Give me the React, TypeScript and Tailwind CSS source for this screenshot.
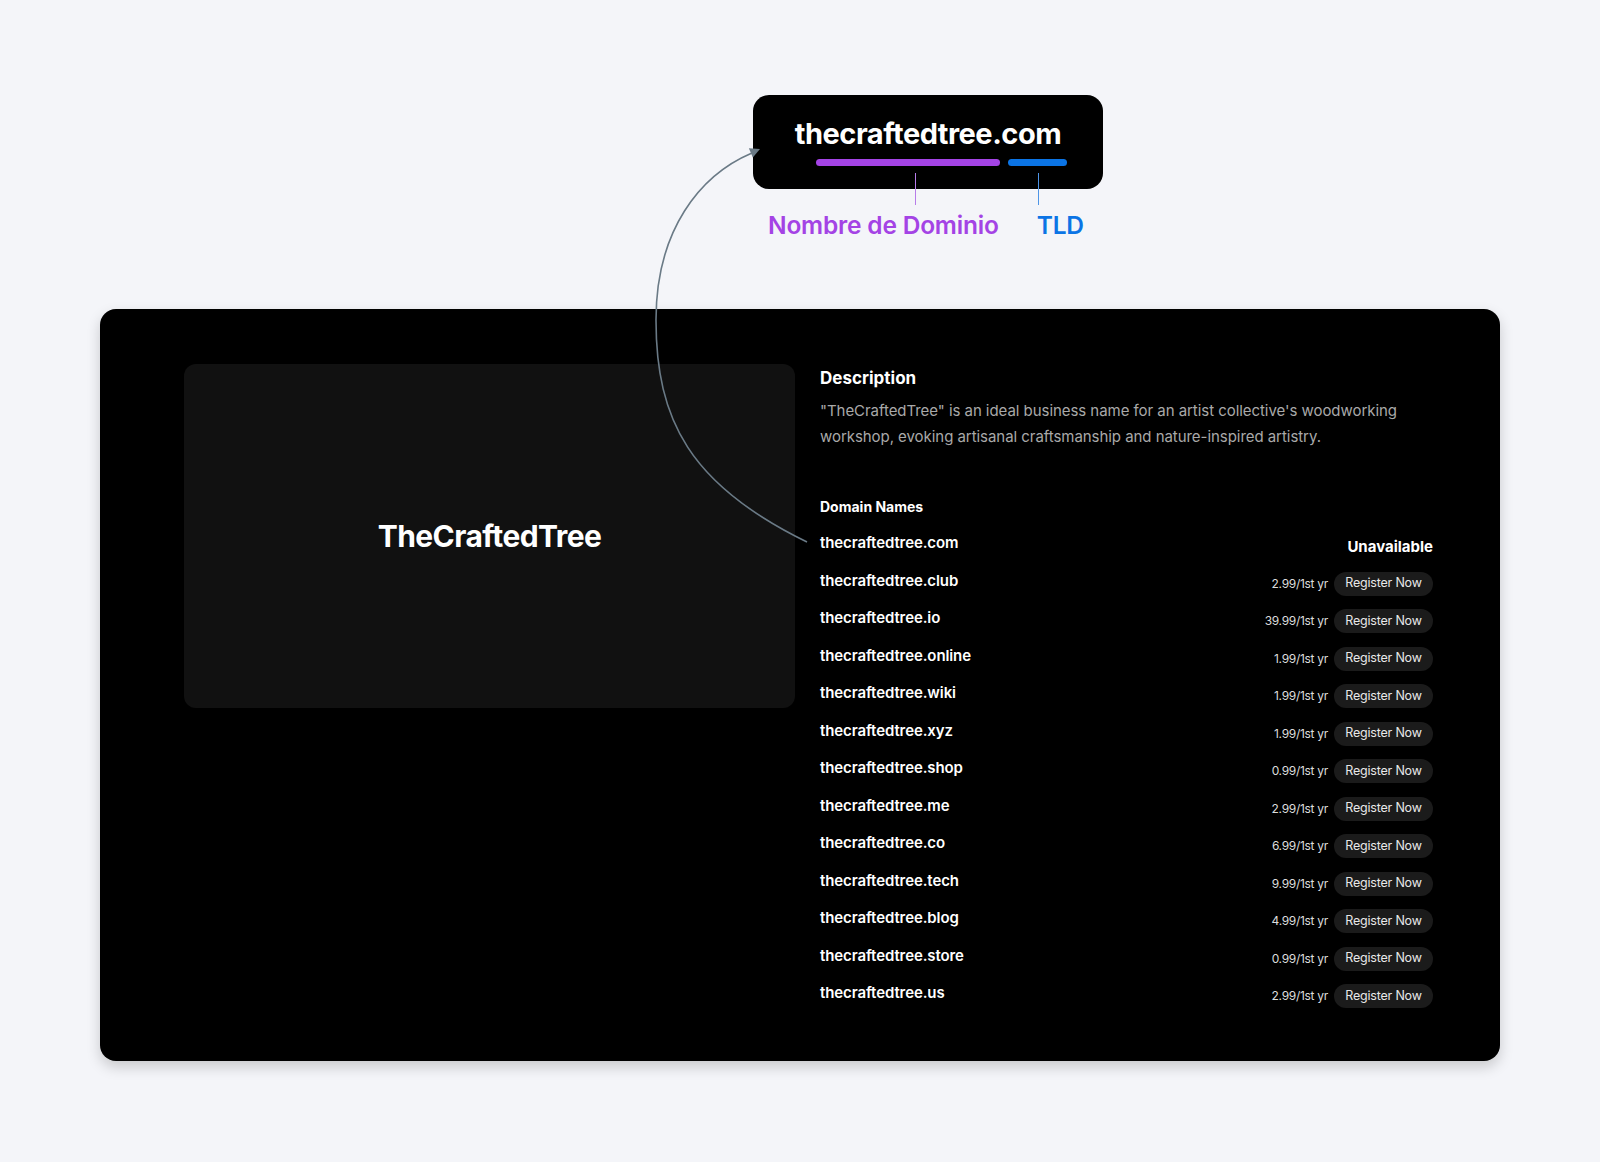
import React from "react";

const domains = [
  { name: "thecraftedtree.com", price: null },
  { name: "thecraftedtree.club", price: "2.99" },
  { name: "thecraftedtree.io", price: "39.99" },
  { name: "thecraftedtree.online", price: "1.99" },
  { name: "thecraftedtree.wiki", price: "1.99" },
  { name: "thecraftedtree.xyz", price: "1.99" },
  { name: "thecraftedtree.shop", price: "0.99" },
  { name: "thecraftedtree.me", price: "2.99" },
  { name: "thecraftedtree.co", price: "6.99" },
  { name: "thecraftedtree.tech", price: "9.99" },
  { name: "thecraftedtree.blog", price: "4.99" },
  { name: "thecraftedtree.store", price: "0.99" },
  { name: "thecraftedtree.us", price: "2.99" },
];

const font = { fontFamily: "Inter, 'Noto Sans', sans-serif" };

export default function App() {
  return (
    <div className="relative w-full min-h-[1162px] bg-[#f4f5f9] pt-[95px]" style={font}>
      {/* domain anatomy */}
      <div className="relative ml-[753px] w-[350px]">
        <div className="h-[94px] w-[350px] rounded-[16px] bg-black pt-[22px]">
          <div className="text-center text-[29px] leading-[34px] font-bold tracking-[-0.5px] text-white">
            thecraftedtree.com
          </div>
          <div className="mt-[8px] ml-[63px] flex gap-[8px]">
            <div className="h-[7px] w-[184px] rounded-full bg-[#a443e5]" />
            <div className="h-[7px] w-[59px] rounded-full bg-[#0b74e5]" />
          </div>
        </div>
        <div className="absolute left-[162px] top-[78px] h-[32px] w-px bg-[#b77de9]" />
        <div className="absolute left-[285px] top-[78px] h-[32px] w-px bg-[#4f95e6]" />
        <div className="mt-[22px] flex text-[24.5px] leading-[28px] font-semibold tracking-[-0.2px]">
          <span className="ml-[15px] text-[#a443e5]">Nombre de Dominio</span>
          <span className="ml-[38px] text-[#0b74e5]">TLD</span>
        </div>
      </div>

      {/* result card */}
      <div className="mx-[100px] mt-[70px] flex h-[752px] gap-[25px] rounded-[16px] bg-black pl-[84px] pr-[67px] pt-[55px] shadow-[0_6px_14px_rgba(0,0,0,0.18)]">
        <div className="flex h-[344px] w-[611px] shrink-0 items-center justify-center rounded-[12px] bg-[#111111]">
          <span className="text-[30px] font-bold tracking-[-0.6px] text-white">TheCraftedTree</span>
        </div>

        <div className="flex-1 pt-[2px] text-white">
          <h2 className="text-[17px] leading-[24px] font-bold">Description</h2>
          <p className="mt-[8px] text-[15px] leading-[25.5px] text-[#a9a9a9] tracking-[-0.05px]">
            "TheCraftedTree" is an ideal business name for an artist collective's woodworking
            workshop, evoking artisanal craftsmanship and nature-inspired artistry.
          </p>

          <h3 className="mt-[48px] text-[14px] leading-[20px] font-bold">Domain Names</h3>
          <div className="mt-[15px]">
            {domains.map((d) => (
              <div key={d.name} className="flex h-[37.5px] items-start justify-between">
                <span className="text-[15px] leading-[22px] font-semibold tracking-[-0.1px]">{d.name}</span>
                {d.price ? (
                  <div className="mt-[2px] flex h-[24px] items-center gap-[6px]">
                    <span className="text-[12px] tracking-[-0.3px] text-[#dcdcdc]">{d.price}/1st yr</span>
                    <span className="flex h-[24px] w-[99px] items-center justify-center rounded-full bg-[#1b1b1b] text-[12.5px] tracking-[-0.2px] text-[#e8e8e8]">
                      Register Now
                    </span>
                  </div>
                ) : (
                  <span className="mt-[4px] text-[15px] leading-[22px] font-bold">Unavailable</span>
                )}
              </div>
            ))}
          </div>
        </div>
      </div>

      {/* connector arrow */}
      <svg className="pointer-events-none absolute left-0 top-0" width="1600" height="1162" viewBox="0 0 1600 1162">
        <path
          d="M 807 542 C 690 485, 656 420, 656 320 C 656 230, 700 175, 752 153"
          fill="none"
          stroke="#6a7a86"
          strokeWidth="1.6"
        />
        <polygon points="760,149 752.8,157.5 748.9,148.3" fill="#6a7a86" />
      </svg>
    </div>
  );
}
